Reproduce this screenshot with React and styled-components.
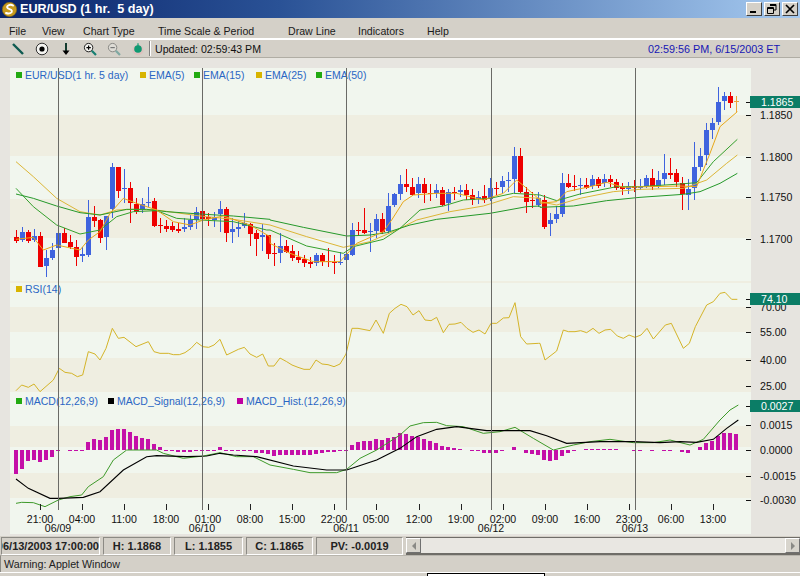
import React from "react";
import styled, { createGlobalStyle } from "styled-components";

const Global = createGlobalStyle`
  html, body { margin: 0; padding: 0; background: #d4d0c8; overflow: hidden; }
  * { box-sizing: border-box; }
`;

const FONT = `"Liberation Sans", Arial, sans-serif`;

const Window = styled.div`
  width: 800px; height: 576px; display: flex; flex-direction: column;
  background: #d4d0c8; font-family: ${FONT}; color: #111; overflow: hidden;
`;
const TitleBar = styled.div`
  height: 18px; flex: none; display: flex; align-items: center; padding: 0 2px 0 2px;
  background: linear-gradient(90deg, #0a246a 0%, #2a5296 35%, #a6caf0 100%);
`;
const TitleText = styled.span`
  margin-left: 3px; color: #fff; font-weight: 700; font-size: 12.6px; white-space: pre;
`;
const WinButtons = styled.div`margin-left: auto; display: flex; gap: 2px;`;
const WinButton = styled.div`
  width: 16px; height: 14px; background: #d4d0c8; display: flex; align-items: center; justify-content: center;
  border: 1px solid; border-color: #fff #404040 #404040 #fff;
`;
const MenuBar = styled.div`
  height: 22px; flex: none; display: flex; align-items: center; padding: 7px 0 2px 9px;
  background: #d4d0c8; border-bottom: 2px solid; border-image: linear-gradient(#77756e 50%, #fff 50%) 1;
`;
const MenuItem = styled.span`
  width: ${p => p.$w}px; font-size: 10.6px; white-space: nowrap; color: #1a1a1a;
`;
const Toolbar = styled.div`
  height: 18px; flex: none; display: flex; align-items: center; background: #d4d0c8; padding: 0 20px 0 6px;
  border-bottom: 1px solid #b0ada4;
`;
const ToolSlot = styled.div`
  width: ${p => p.$w}px; height: 16px; display: flex; align-items: center; justify-content: center;
`;
const Separator = styled.div`width: 2px; height: 15px; margin: 0 4px 0 0; border-left: 1px solid #808080; border-right: 1px solid #fff;`;
const Updated = styled.span`font-size: 10.6px; white-space: nowrap; margin-top: 1px;`;
const Clock = styled.span`margin-left: auto; font-size: 10.8px; color: #1616b4; white-space: nowrap;`;
const ChartSvg = styled.svg`display: block; width: 800px; height: 478px; background: #e7e5e0; flex: none;`;
const Label = styled.text`font-family: ${FONT}; font-size: 10.6px; fill: #111;`;
const Legend = styled.text`font-family: ${FONT}; font-size: 10.5px; fill: #2a66c4;`;
const BadgeText = styled.text`font-family: ${FONT}; font-size: 10.6px; fill: #fff;`;
const StatusBar = styled.div`height: 19px; flex: none; display: flex; gap: 3px; padding: 1px 0 0 1px; background: #d4d0c8;`;
const StatusCell = styled.div`
  width: ${p => p.$w}px; height: 18px; overflow: hidden; display: flex; align-items: center;
  justify-content: ${p => (p.$clipStart ? "flex-end" : "center")};
  font-size: 11px; font-weight: 700; white-space: nowrap; color: #222;
  border: 1px solid; border-color: #8c8a84 #fff #fff #8c8a84;
`;
const Scrollbar = styled.div`
  flex: 1; height: 18px; display: flex; justify-content: space-between;
  background: #e9e7e2; border-top: 1px solid #6f6d68; border-bottom: 2px solid #6f6d68;
`;
const ScrollButton = styled.div`
  width: 15px; background: #d8d5cd; display: flex; align-items: center; justify-content: center;
  border: 1px solid; border-color: #fff #707070 #707070 #fff;
`;
const WarningBar = styled.div`
  height: 17px; flex: none; display: flex; align-items: center; padding-left: 3px; font-size: 10.7px; color: #222;
  background: #d4d0c8; border-left: 1px solid #8c8a84; border-top: 1px solid #b8b5ad;
`;
const BottomStrip = styled.div`
  height: 4px; flex: none; overflow: hidden; padding-left: 427px; background: #d4d0c8; border-top: 1px solid #fff;
`;
const AppletBox = styled.div`width: 118px; height: 3px; background: #fff; border-top: 1px solid #000; border-left: 1px solid #000; border-right: 1px solid #000;`;

// reading helper: each block is stored at 3x scale against an origin
const trace = (blocks) => blocks.flatMap(([ox, oy, list]) => list.map(([x, y]) => `${ox + x / 3},${oy + y / 3}`)).join(" ");

const E50 = trace([
  [0, 130, [[48,192],[100,205],[170,228],[240,248],[300,255],[380,238],[440,238],[500,245],[600,252],[700,258],[810,268]]],
  [270, 130, [[0,270],[100,292],[230,318],[300,315],[350,308],[420,285],[500,268],[660,250],[770,230],[810,228]]],
  [540, 80, [[0,382],[100,378],[200,362],[300,352],[430,343],[480,335],[540,310],[592,280]]],
]);
const E25 = trace([
  [0, 130, [[48,95],[100,140],[170,205],[240,245],[300,255],[350,240],[400,238],[470,240],[600,258],[700,268],[810,285]]],
  [270, 130, [[0,285],[110,320],[220,352],[300,335],[380,300],[440,270],[540,245],[640,228],[730,200],[810,205]]],
  [540, 80, [[0,365],[50,375],[120,355],[220,335],[300,328],[430,325],[500,300],[560,250],[592,225]]],
]);
const E15 = trace([
  [0, 130, [[48,175],[100,230],[170,285],[240,312],[300,300],[350,260],[400,245],[470,242],[530,265],[600,270],[700,275],[800,300]]],
  [270, 130, [[0,300],[110,348],[220,370],[250,350],[340,328],[390,295],[450,240],[520,228],[580,210],[660,205],[730,190],[810,195]]],
  [540, 80, [[0,345],[50,362],[120,342],[230,320],[300,320],[420,312],[470,308],[520,245],[592,178]]],
]);
const E5 = trace([
  [0, 130, [[48,328],[100,322],[130,360],[170,345],[240,360],[265,330],[300,305],[330,250],[370,205],[410,220],[470,240],[520,275],[570,285],[610,270],[670,258],[750,285],[810,320]]],
  [270, 130, [[0,340],[60,370],[130,395],[210,395],[260,340],[340,305],[365,270],[400,215],[430,195],[500,190],[560,190],[640,210],[700,190],[740,150],[770,175],[810,210]]],
  [540, 80, [[0,370],[50,365],[80,335],[150,320],[200,307],[250,322],[330,320],[420,318],[470,320],[510,220],[540,140],[592,95]]],
]);
const RSI = trace([
  [0, 280, [[48,332],[65,315],[85,322],[102,312],[120,335],[160,300],[178,265],[195,277],[215,280],[232,290],[248,285],[265,215],[285,222],[300,240],[318,205],[337,145],[355,175],[372,172],[408,200],[445,185],[462,215],[480,220],[505,220],[520,224],[538,224],[555,218],[573,205],[590,187],[608,200],[626,202],[642,195],[660,178],[680,225],[715,208],[733,202],[750,222],[770,232],[788,222],[805,258]]],
  [270, 280, [[12,258],[30,234],[50,245],[66,255],[84,262],[102,268],[120,268],[138,240],[156,252],[174,254],[192,260],[210,252],[228,222],[246,145],[264,145],[300,152],[318,120],[340,160],[358,100],[375,85],[393,73],[411,80],[429,105],[447,92],[465,120],[483,122],[500,112],[520,158],[537,133],[555,132],[573,127],[591,145],[609,157],[627,150],[645,162],[663,130],[680,130],[700,114],[717,113],[735,68],[752,170],[770,192],[805,190]]],
  [540, 280, [[0,190],[15,240],[50,213],[70,150],[85,155],[105,155],[122,152],[140,158],[159,145],[177,160],[195,150],[212,148],[232,168],[250,175],[267,165],[285,172],[303,165],[321,145],[340,177],[376,135],[394,130],[430,205],[448,190],[466,140],[500,75],[520,65],[540,40],[555,37],[575,58],[592,58]]],
]);
const MACD = trace([
  [0, 390, [[48,340],[65,337],[100,338],[135,350],[175,330],[210,320],[245,315],[265,290],[310,260],[340,210],[380,180],[470,180],[490,190],[550,205],[610,198],[660,188],[710,200],[760,200],[810,225],[880,238],[930,248],[1010,248],[1040,238],[1080,205],[1130,180],[1200,135]]],
  [400, 390, [[30,108],[70,98],[110,97],[140,107],[190,110],[250,130],[300,125],[345,112],[400,145],[460,180],[520,165],[570,155],[630,148],[700,158],[760,158],[810,150],[870,165],[910,148],[960,90],[990,60],[1015,45]]],
]);
const SIGNAL = trace([
  [0, 390, [[48,267],[85,295],[150,325],[175,325],[250,322],[300,305],[370,240],[440,200],[470,197],[560,200],[620,198],[660,190],[700,195],[770,200],[880,228],[980,240],[1040,240],[1130,210],[1200,175]]],
  [400, 390, [[50,140],[110,118],[170,110],[260,122],[390,122],[440,137],[500,160],[600,155],[700,155],[780,158],[840,155],[890,157],[940,148],[980,115],[1015,90]]],
]);

// [colour, wick top, wick bottom, body top, body bottom] at 3x, origin y given per block
const CANDLES = [
  [130, [
    ["r",300,340,322,332],["b",292,335,305,330],["r",300,338,305,332],["b",298,335,318,330],["r",305,410,318,410],
    ["b",360,442,385,408],["b",340,390,360,385],["b",280,375,310,355],["r",295,340,310,338],["r",315,358,337,352],
    ["r",330,408,352,380],["b",350,395,372,378],["b",210,380,262,375],["r",228,290,262,272],["r",268,340,270,323],
    ["b",258,360,258,320],["b",100,265,110,238],["r",110,205,110,182],["b",118,220,175,178],["r",155,280,175,220],
    ["r",205,252,222,245],["b",205,250,222,240],["b",170,230,215,218],["r",205,290,213,288],["r",265,310,286,288],
    ["r",270,305,288,298],["r",275,305,288,300],["r",280,310,297,303],["b",265,305,290,298],["b",255,300,270,290],
    ["b",232,298,245,270],["r",232,275,243,268],["r",248,288,262,268],["b",245,290,262,270],["b",212,305,238,252],
    ["r",232,335,238,308],["b",265,340,296,305],["b",272,320,290,296],["b",250,295,278,288],["r",280,348,282,312],
    ["r",300,378,310,326],["b",282,362,315,322],["r",315,388,315,372],
  ]],
  [130, [
    ["r",340,408,368,371],["b",310,400,348,368],["r",330,370,348,365],["r",345,392,362,385],["r",362,400,380,390],
    ["r",375,410,387,400],["r",380,415,395,402],["b",368,408,375,400],["r",368,408,375,395],["r",355,410,392,397],
    ["r",375,432,395,400],["b",365,405,395,397],["b",345,392,372,390],["b",280,378,300,375],["r",275,318,300,302],
    ["r",235,312,300,308],["b",278,365,303,305],["b",252,325,267,303],["r",250,312,267,305],["b",188,312,228,303],
    ["b",188,232,192,225],["b",135,210,162,192],["r",118,185,162,172],["r",145,197,170,195],["b",140,205,162,188],
    ["r",145,218,162,190],["r",162,213,190,192],["b",162,205,180,190],["r",172,228,180,226],["b",178,243,186,220],
    ["r",172,210,187,189],["b",165,200,180,186],["r",162,210,180,195],["r",178,225,196,210],["b",182,222,200,207],
    ["r",165,220,198,210],["b",145,212,175,208],["r",155,195,175,178],["b",138,190,152,172],["b",125,185,150,152],
    ["b",52,188,78,148],["r",55,188,78,187],["r",170,248,186,215],["r",185,235,210,212],["b",185,230,205,225],
  ]],
  [80, [
    ["r",345,448,360,440],["b",400,468,420,433],["b",378,428,402,418],["b",280,410,310,402],["r",282,325,310,320],
    ["r",285,332,318,320],["b",295,345,315,318],["r",295,328,315,325],["b",285,328,298,318],["r",290,325,298,317],
    ["b",282,320,298,310],["r",285,322,298,305],["r",297,330,305,325],["r",310,345,320,328],["b",305,342,317,326],
    ["r",300,335,317,323],["b",297,330,320,322],["b",285,325,295,318],["r",268,330,295,322],["b",272,325,300,318],
    ["b",222,315,280,298],["r",235,298,280,284],["r",268,322,280,305],["r",292,390,308,342],["b",298,390,328,344],
    ["b",185,360,262,325],["b",205,272,228,260],["b",130,255,150,225],["b",115,178,128,150],["b",20,135,65,125],
    ["b",35,90,48,62],["r",35,85,48,68],["o",48,95,64,66],
  ]],
].flatMap(([oy, rows]) => rows.map(([c, wt, wb, bt, bb]) => ({
  c, wt: oy + wt / 3, wb: oy + wb / 3, bt: oy + bt / 3, bb: oy + bb / 3,
})));

const CANDLE_FILL = { r: "#ee0000", b: "#3f63de", o: "#eda33a" };

// MACD histogram: positive is above the zero line, negative below
const HIST = [
  -24,-18.6,-11,-10,-11.6,-10,-7,-1,0,-1,-1,-1,8,11,10,13,20,21,21,18,14,12,11,6,3,-1,-1,-2,-2,-1.5,-1,-1,-1,-1,3,-1,-1,-1,-1,-1,
  -3,-3,-4,-6,-5,-5,-5,-5,-5,-5,-4,-3,-2,-2,-1,-1,5,8,9,9,11,10,12,13,
  17,16,14,13,11,9,7,4,3,2,1,0,-1,-1,-3,-3,-2.5,-1,0,3,0,-3,-4,-5,-10,-11,-10,-6,-3,-1,0,1,1.5,1.5,1.5,1.5,1,0,0,-1,-1,0,-1,0,-1,-1,0,-2,-3,0,3,7,9,14,17,17,16,
];

const BANDS = [
  [68,115,0],[115,156,1],[156,199,0],[199,238,1],[238,281,0],[281,283,1],[283,307,0],[307,332,1],[332,358,0],[358,392,1],
  [392,426,0],[426,447,1],[447,473,0],[473,498,1],[498,534,0],
];
const DIVIDERS = [58, 202, 346, 491, 635];
const TIMES = [
  [40,"21:00"],[82,"04:00"],[124,"11:00"],[166,"18:00"],[208,"01:00"],[250,"08:00"],[292,"15:00"],[334,"22:00"],[376,"05:00"],
  [419,"12:00"],[461,"19:00"],[503,"02:00"],[545,"09:00"],[587,"16:00"],[629,"23:00"],[671,"06:00"],[713,"13:00"],
];
const DATES = [[58,"06/09"],[202,"06/10"],[346,"06/11"],[491,"06/12"],[635,"06/13"]];
const AXIS = [
  [115,"1.1850"],[157,"1.1800"],[197,"1.1750"],[239,"1.1700"],
  [307,"70.00"],[332,"55.00"],[359.5,"40.00"],[386,"25.00"],
  [425,"0.0015"],[450,"0.0000"],[475.5,"-0.0015"],[500,"-0.0030"],
];
const BADGES = [[96,"1.1865"],[293,"74.10"],[400,"0.0027"]];
const LEGENDS = [
  [16,75,"#22aa11","EUR/USD(1 hr. 5 day)"],[140,75,"#d8b400","EMA(5)"],[194,75,"#22aa11","EMA(15)"],[256,75,"#d8b400","EMA(25)"],[316,75,"#22aa11","EMA(50)"],
  [16,289,"#d8b400","RSI(14)"],
  [16,401,"#22aa11","MACD(12,26,9)"],[108,401,"#000","MACD_Signal(12,26,9)"],[237,401,"#c000a0","MACD_Hist.(12,26,9)"],
];

function Chart() {
  return (
    <ChartSvg viewBox="0 58 800 478" aria-label="EUR/USD chart">
      <rect x="750" y="58" width="50" height="478" fill="#e6e4df" />
      {BANDS.map(([a, b, k]) => (
        <rect key={a} x="10" y={a} width="741" height={b - a} fill={k ? "#efeee1" : "#f1f6ee"} shapeRendering="crispEdges" />
      ))}
      {HIST.map((v, i) => (
        <rect key={i} x={14 + 6 * i} y={v >= 0 ? 450 - v : 450} width="4" height={Math.max(Math.abs(v), v === 0 ? 0 : 1)}
          fill="#c410a8" shapeRendering="crispEdges" />
      ))}
      <polyline points={MACD} fill="none" stroke="#3e9a2a" strokeWidth="1" />
      <polyline points={SIGNAL} fill="none" stroke="#000" strokeWidth="1.1" />
      <polyline points={RSI} fill="none" stroke="#d4b428" strokeWidth="1" />
      {CANDLES.map((k, i) => {
        const x = 16 + 6 * i;
        const fill = CANDLE_FILL[k.c];
        return (
          <g key={i} shapeRendering="crispEdges" fill={fill}>
            <rect x={x} y={k.wt} width="1" height={k.wb - k.wt} />
            <rect x={x - 2} y={k.bt} width="5" height={Math.max(k.bb - k.bt, 1)} />
          </g>
        );
      })}
      <polyline points={E25} fill="none" stroke="#dcb637" strokeWidth="1" />
      <polyline points={E15} fill="none" stroke="#34a02c" strokeWidth="1" />
      <polyline points={E50} fill="none" stroke="#25992a" strokeWidth="1" />
      <polyline points={E5} fill="none" stroke="#e7a81a" strokeWidth="1" />
      {TIMES.map(([x, t]) => (
        <g key={t}>
          <rect x={x} y="504" width="1" height="6" fill="#222" shapeRendering="crispEdges" />
          <Label x={x} y="523" textAnchor="middle">{t}</Label>
        </g>
      ))}
      {DATES.map(([x, t]) => <Label key={t} x={x} y="532" textAnchor="middle">{t}</Label>)}
      {AXIS.map(([y, t]) => (
        <g key={t}>
          <rect x="746" y={Math.round(y)} width="5" height="1" fill="#111" shapeRendering="crispEdges" />
          <Label x="760" y={y + 4}>{t}</Label>
        </g>
      ))}
      {BADGES.map(([y, t]) => (
        <g key={t}>
          <rect x="750" y={y} width="50" height="12" fill="#0b7d66" shapeRendering="crispEdges" />
          <rect x="746" y={y + 6} width="4" height="1" fill="#111" shapeRendering="crispEdges" />
          <BadgeText x="761" y={y + 10}>{t}</BadgeText>
        </g>
      ))}
      {LEGENDS.map(([x, y, c, t]) => (
        <g key={t}>
          <rect x={x} y={y - 3} width="6" height="6" fill={c} shapeRendering="crispEdges" />
          <Legend x={x + 9} y={y + 4}>{t}</Legend>
        </g>
      ))}
      {DIVIDERS.map((x) => <rect key={x} x={x} y="68" width="1" height="442" fill="#6a6a66" shapeRendering="crispEdges" />)}
    </ChartSvg>
  );
}

const Logo = () => (
  <svg width="15" height="15" viewBox="0 0 15 15">
    <circle cx="7.5" cy="7.5" r="7.2" fill="#c69a1e" stroke="#7d6412" strokeWidth="0.6" />
    <path d="M11 3.6C8.6 1.8 4.6 3.2 5.2 5.6 5.7 7.6 9.6 6.8 9.9 9 10.2 11 7 12.2 4 11" fill="none" stroke="#fff" strokeWidth="1.9" strokeLinecap="round" />
  </svg>
);

const Tools = () => (
  <>
    <ToolSlot $w="24">
      <svg width="14" height="14" viewBox="0 0 14 14"><path d="M2 2 12 12" stroke="#0e5a50" strokeWidth="2.4" /></svg>
    </ToolSlot>
    <ToolSlot $w="24">
      <svg width="14" height="14" viewBox="0 0 14 14"><circle cx="7" cy="7" r="5.8" fill="#f4f4f0" stroke="#333" strokeWidth="1" /><circle cx="7" cy="7" r="2.6" fill="#000" /></svg>
    </ToolSlot>
    <ToolSlot $w="24">
      <svg width="12" height="14" viewBox="0 0 12 14"><path d="M6 1V9" stroke="#143c30" strokeWidth="2" /><path d="M2.5 8.5H9.5L6 13Z" fill="#000" /></svg>
    </ToolSlot>
    <ToolSlot $w="24">
      <svg width="14" height="14" viewBox="0 0 14 14"><circle cx="5.6" cy="5.6" r="4.2" fill="#f4f4f0" stroke="#222" /><path d="M3.4 5.6H7.8M5.6 3.4V7.8" stroke="#000" strokeWidth="1.2" /><path d="M8.8 8.8 13 13" stroke="#167f72" strokeWidth="2.2" /></svg>
    </ToolSlot>
    <ToolSlot $w="24">
      <svg width="14" height="14" viewBox="0 0 14 14"><circle cx="5.6" cy="5.6" r="4.2" fill="#dedcd6" stroke="#8a8a86" /><path d="M3.4 5.6H7.8" stroke="#777" strokeWidth="1.2" /><path d="M8.8 8.8 13 13" stroke="#7fa8a2" strokeWidth="2.2" /></svg>
    </ToolSlot>
    <ToolSlot $w="23">
      <svg width="14" height="14" viewBox="0 0 14 14"><ellipse cx="7" cy="8" rx="5.6" ry="5.2" fill="#e2b8b8" opacity="0.6" /><circle cx="7" cy="7" r="3.8" fill="#0f9a72" /><path d="M7 1.2V4" stroke="#0f9a72" strokeWidth="1.2" /></svg>
    </ToolSlot>
  </>
);

export default function App() {
  return (
    <Window>
      <Global />
      <TitleBar>
        <Logo />
        <TitleText>{"EUR/USD (1 hr.  5 day)"}</TitleText>
        <WinButtons>
          <WinButton><svg width="10" height="10" viewBox="0 0 10 10"><rect x="1" y="7" width="6" height="2" fill="#000" /></svg></WinButton>
          <WinButton><svg width="10" height="10" viewBox="0 0 10 10"><path d="M3 .5H9V6H7M.5 3.5H6.5V9.5H.5ZM.5 4.5H6.5M3 1.5H9" fill="none" stroke="#000" /></svg></WinButton>
          <WinButton><svg width="10" height="10" viewBox="0 0 10 10"><path d="M1 1 9 9M9 1 1 9" stroke="#000" strokeWidth="1.7" /></svg></WinButton>
        </WinButtons>
      </TitleBar>
      <MenuBar>
        <MenuItem $w={33}>File</MenuItem>
        <MenuItem $w={41}>View</MenuItem>
        <MenuItem $w={75}>Chart Type</MenuItem>
        <MenuItem $w={130}>Time Scale &amp; Period</MenuItem>
        <MenuItem $w={70}>Draw Line</MenuItem>
        <MenuItem $w={69}>Indicators</MenuItem>
        <MenuItem $w={30}>Help</MenuItem>
      </MenuBar>
      <Toolbar>
        <Tools />
        <Separator />
        <Updated>Updated: 02:59:43 PM</Updated>
        <Clock>02:59:56 PM, 6/15/2003 ET</Clock>
      </Toolbar>
      <Chart />
      <StatusBar>
        <StatusCell $w={99} $clipStart>06/13/2003 17:00:00</StatusCell>
        <StatusCell $w={68}>H: 1.1868</StatusCell>
        <StatusCell $w={69}>L: 1.1855</StatusCell>
        <StatusCell $w={67}>C: 1.1865</StatusCell>
        <StatusCell $w={87}>PV: -0.0019</StatusCell>
        <Scrollbar>
          <ScrollButton><svg width="6" height="8" viewBox="0 0 6 8"><path d="M5 0V8L1 4Z" fill="#8a8a86" /></svg></ScrollButton>
          <ScrollButton><svg width="6" height="8" viewBox="0 0 6 8"><path d="M1 0V8L5 4Z" fill="#8a8a86" /></svg></ScrollButton>
        </Scrollbar>
      </StatusBar>
      <WarningBar>Warning: Applet Window</WarningBar>
      <BottomStrip><AppletBox /></BottomStrip>
    </Window>
  );
}
